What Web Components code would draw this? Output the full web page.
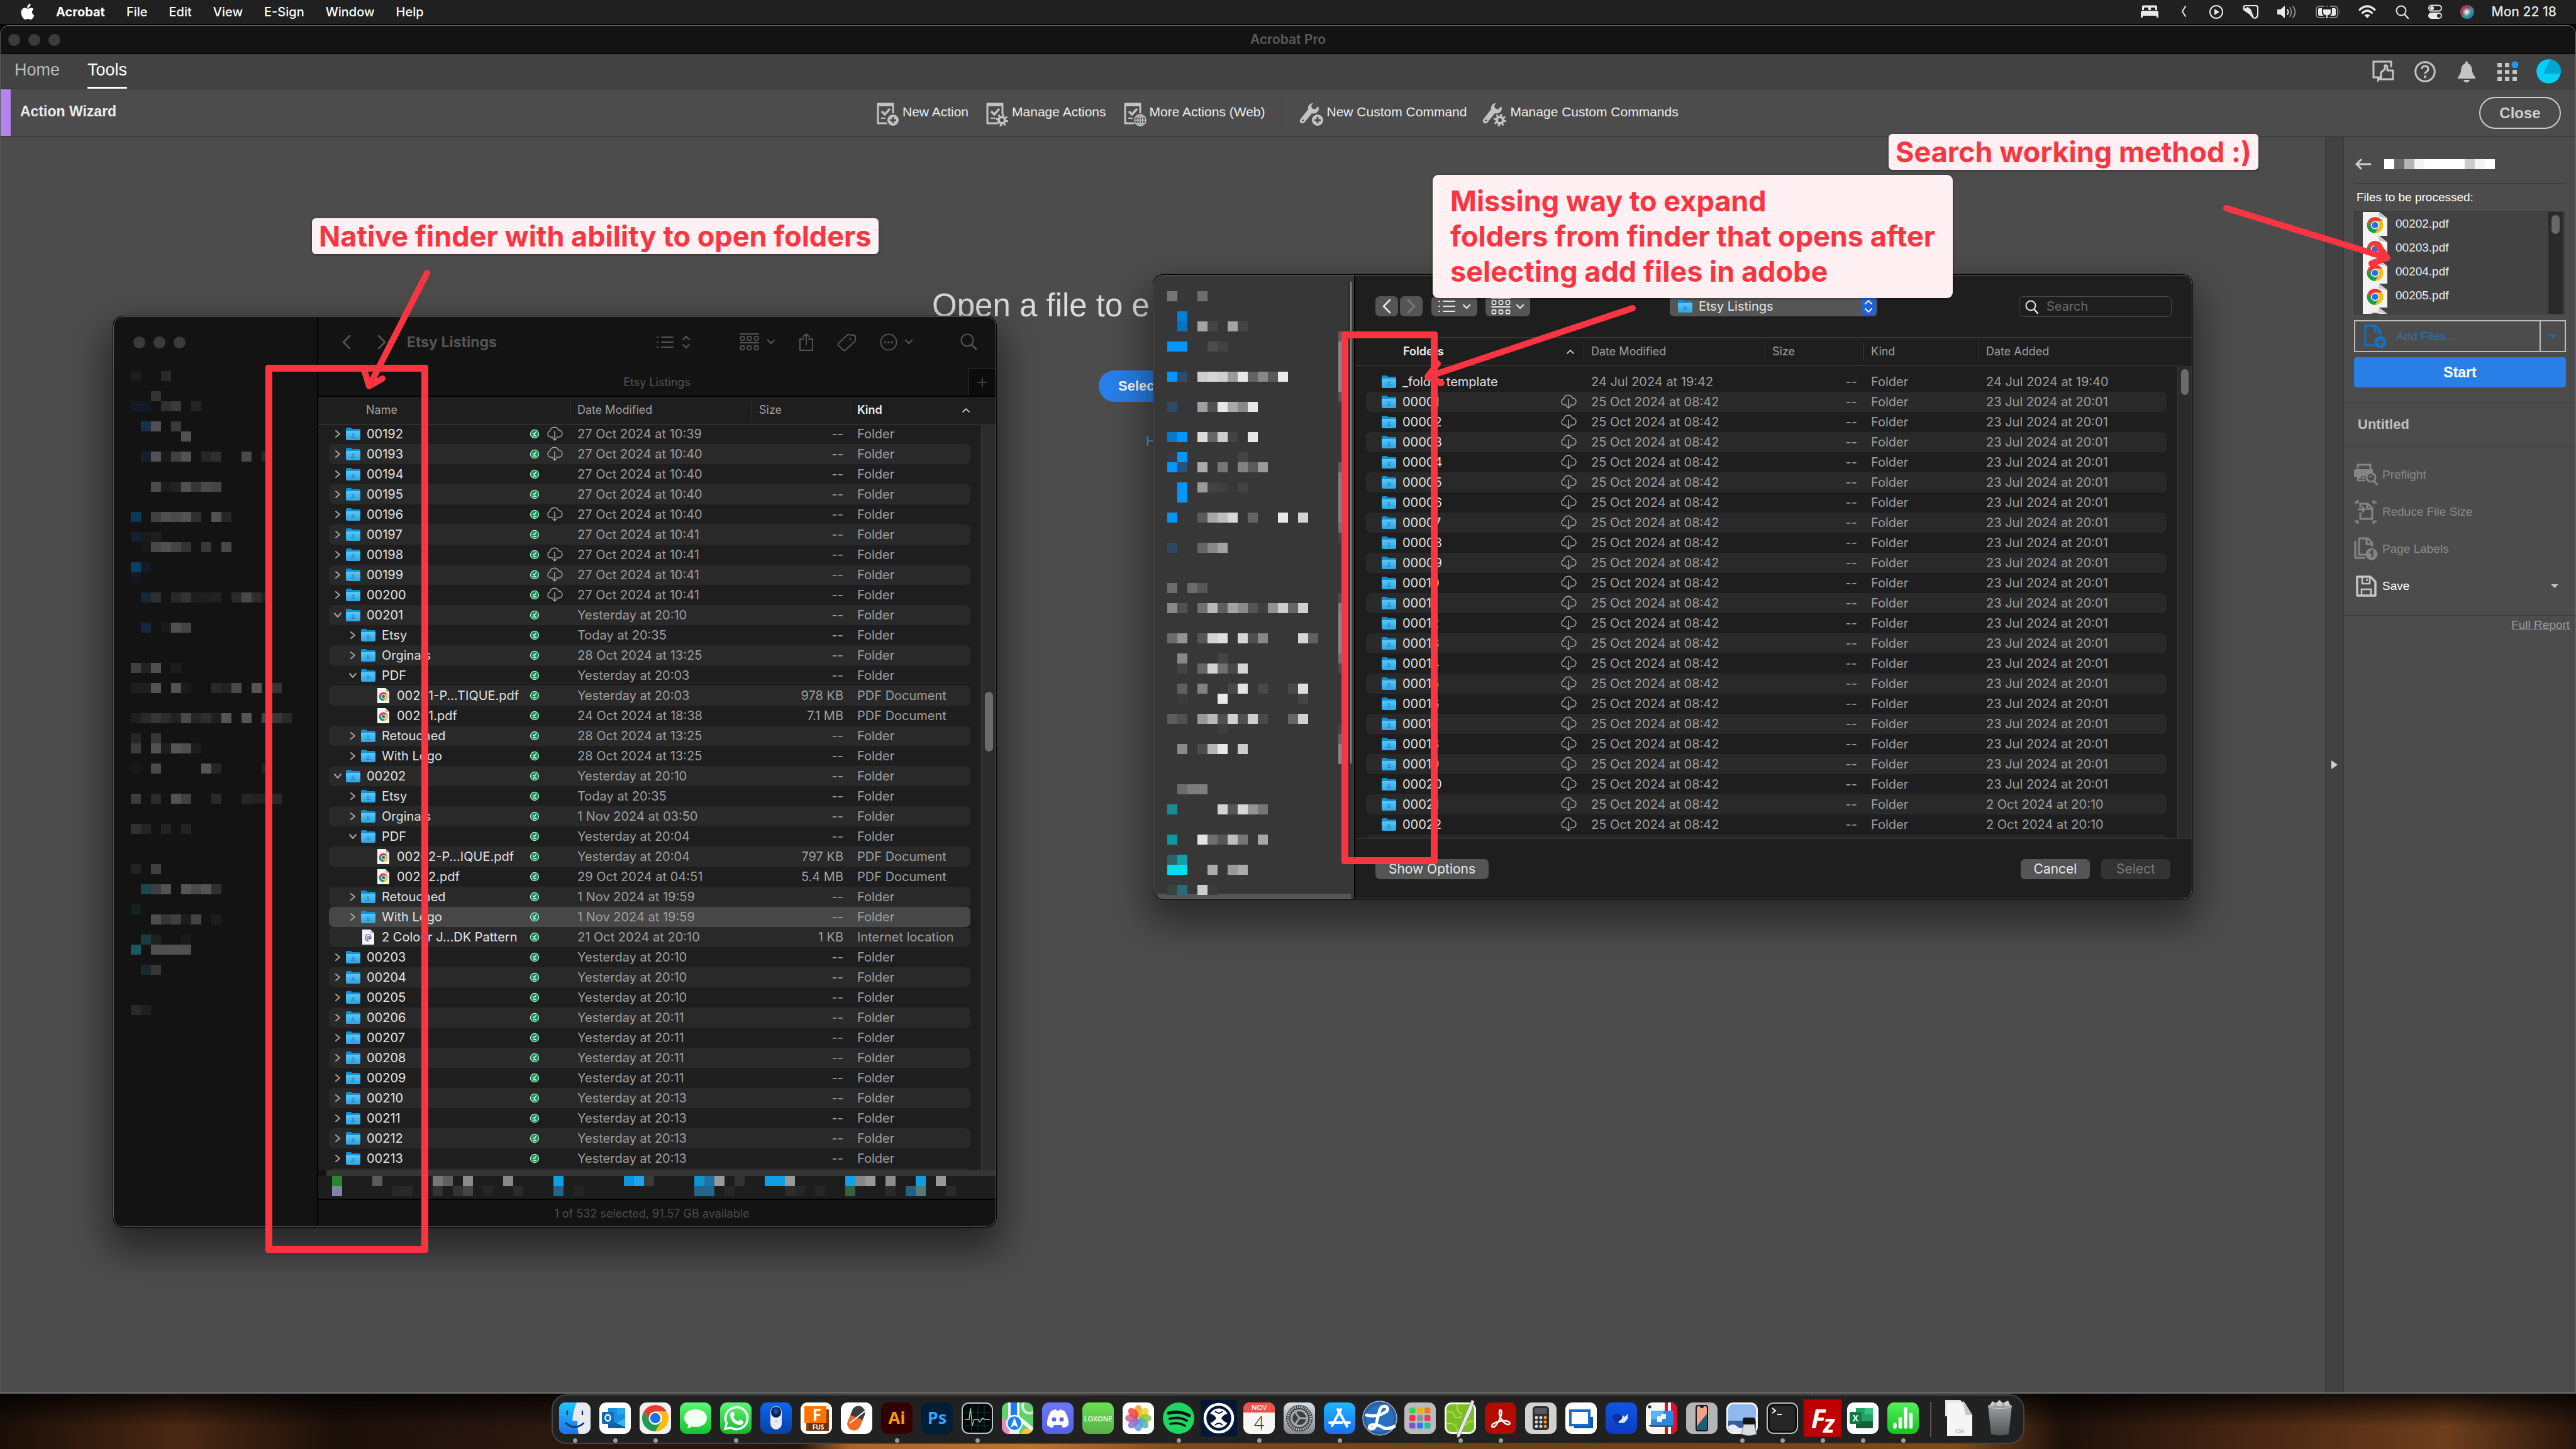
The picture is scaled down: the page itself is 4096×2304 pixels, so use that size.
<!DOCTYPE html>
<html lang="en">
<head>
<meta charset="utf-8">
<title>Acrobat Pro</title>
<style>
html,body{margin:0;padding:0}
body{min-height:100vh;display:flex;flex-direction:column;position:relative;overflow:hidden;font-family:Inter,"Liberation Sans",sans-serif;font-size:20px;color:#fff;
background:linear-gradient(180deg,rgba(0,0,0,.8),rgba(0,0,0,0) 60%) 0 100%/100% 88px no-repeat,linear-gradient(90deg,#1a0f08 0,#4a2814 7%,#1c100a 13%,#2a1710 21%,#26150c 31%,#a8652a 33%,#b87432 40%,#7a4a20 46%,#6e401a 60%,#7e4a1e 76%,#1d100a 80%,#4a2814 88%,#6e3e1c 95%,#2a170c 100%) 0 100%/100% 88px no-repeat,#000}
desk-menubar{flex:none}
acrobat-window{flex:1;margin-top:2px}
desk-dock{margin:1px auto 8px}
finder-window{position:absolute;left:180px;top:503px}
open-dialog{position:absolute;left:1834px;top:437px}
note-label{position:absolute}
note-frame{position:absolute}
note-arrows{position:absolute;inset:0;pointer-events:none}
</style>
</head>
<body>
<desk-menubar></desk-menubar>
<acrobat-window></acrobat-window>
<desk-dock></desk-dock>
<finder-window></finder-window>
<open-dialog></open-dialog>
<note-frame style="left:422px;top:580px;width:259px;height:1412px"></note-frame>
<note-frame style="left:2133px;top:527px;width:153px;height:847px"></note-frame>
<note-arrows></note-arrows>
<note-label style="left:496px;top:347px">Native finder with ability to open folders</note-label>
<note-label large style="left:2278px;top:278px">Missing way to expand<br>folders from finder that opens after<br>selecting add files in adobe</note-label>
<note-label style="left:3003px;top:213px">Search working method :)</note-label>
<script>
/* ---------- registration helper ---------- */
function element(name, html, setup) {
  const template = document.createElement('template');
  template.innerHTML = html;
  customElements.define(name, class extends HTMLElement {
    constructor() {
      super();
      this.attachShadow({ mode: 'open' }).append(template.content.cloneNode(true));
    }
    connectedCallback() { if (setup) setup(this, this.shadowRoot); }
  });
}

/* ---------- shared glyph parts ---------- */
const chrome = (x, y, r) => `<g transform="translate(${x} ${y}) scale(${r})"><path fill="#ea3b2e" d="M-.866-.5A1 1 0 0 1 .866-.5L0-.5-.433.25z"/><path fill="#fbbd0a" d="M.866-.5A1 1 0 0 1 0 1L.433.25 0-.5z"/><path fill="#1f9d4d" d="M0 1A1 1 0 0 1-.866-.5L-.433.25.433.25z"/><circle r=".5" fill="#fff"/><circle r=".39" fill="#1a73e8"/></g>`;
const S = 'fill="none" stroke="currentColor" stroke-linecap="round" stroke-linejoin="round"';
const pageCheck = `<path d="M20 34H4V3h24v17" fill="none" stroke="currentColor" stroke-width="3" stroke-linejoin="round"/><path d="M4 5h24" stroke="currentColor" stroke-width="4"/><path d="M10 15l5 5 8-9" fill="none" stroke="currentColor" stroke-width="3.5"/><path d="M9 26h7" stroke="currentColor" stroke-width="2"/>`;
const wrench = `<path d="M21 2a8 8 0 0 0-8 10L1 27a4 4 0 0 0 6 6l12-15a8 8 0 0 0 10-11l-5 5-5-2-1-4z" fill="currentColor"/><circle cx="4.500" cy="29.500" r="1.600" fill="#4c4c4c"/>`;
const plusBadge = `<circle cx="28" cy="29" r="11" fill="#4c4c4c"/><circle cx="28" cy="29" r="9" fill="currentColor"/><path d="M28 24v10M23 29h10" stroke="#4c4c4c" stroke-width="3"/>`;
const gearBadge = `<circle cx="27" cy="29" r="10" fill="#4c4c4c"/><circle cx="27" cy="29" r="8.500" fill="none" stroke="currentColor" stroke-width="3" stroke-dasharray="3.300 3.370"/><circle cx="27" cy="29" r="5" fill="none" stroke="currentColor" stroke-width="4"/>`;
const globeBadge = `<circle cx="28" cy="29" r="11" fill="#4c4c4c"/><g fill="none" stroke="currentColor" stroke-width="1.600"><circle cx="28" cy="29" r="9"/><ellipse cx="28" cy="29" rx="4" ry="9"/><path d="M28 20v18M19 29h18M21 24h14M21 34h14"/></g>`;

const ICONS = {
  apple: [22, 26, `<path fill="#fff" d="M15.600 0c.2 2-.6 3.600-1.600 4.800-1 1.100-2.400 1.900-3.900 1.800-.2-1.800.6-3.500 1.600-4.600C12.700.9 14.300.1 15.600 0zM20.500 8.800c-1.500 1-2.500 2.500-2.500 4.500 0 2.300 1.400 4.300 3.400 5.100-.8 2.400-3.200 6.600-5.600 6.600-1.600 0-2.200-1-4.200-1s-2.700 1-4.200 1C4.200 25 .6 19 .6 14c0-4.800 3-7.400 6-7.400 1.900 0 3.300 1.200 4.600 1.200s3-1.300 5.200-1.300c1.500 0 3.200.8 4.100 2.300z"/>`],
  bed: [36, 22, `<path fill="#e8e8e8" d="M2 8V3q0-2.500 2.500-2.500h19Q26 .500 26 3v5h-3V5q0-1-1-1h-6v4h-4V4H6Q5 4 5 5v3zM0 20v-8q0-3 3-3h22q3 0 3 3v8h-3v-3H3v3z"/>`],
  back1: [16, 22, `<path ${S} stroke-width="2" d="M7 2L2 10l5 8"/>`],
  play: [26, 24, `<circle cx="12" cy="12" r="10" ${S} stroke-width="2"/><path fill="#e8e8e8" d="M9 7l8 5-8 5z"/>`],
  shield: [26, 24, `<path fill="#e8e8e8" fill-rule="evenodd" d="M4 1h17q4 0 4 4v10q0 8-6 8-3 0-8-7L1 9Q-1 1 4 1zm1 2q-3 0-2 4l5-3 5 4 5 13q5 0 5-7V6q0-3-3-3z"/>`],
  volume: [34, 24, `<path fill="#e8e8e8" d="M1 8h5l7-6v20l-7-6H1z"/><path ${S} stroke-width="2" d="M17 8q3 4 0 8"/><path ${S} stroke-width="2" stroke-opacity=".55" d="M21 5q5 7 0 14M26 3q7 9 0 18"/>`],
  battery: [40, 24, `<rect x="1" y="3" width="34" height="18" rx="5" ${S} stroke-width="2" stroke-opacity=".5"/><path fill="#777" d="M37 9q3 3 0 6z"/><rect x="4" y="6" width="28" height="12" rx="2" fill="#e8e8e8"/><path fill="#e8e8e8" stroke="#202020" stroke-width="2" d="M14 1v6h-3v5q0 5 5 6v5h4v-5q5-1 5-6V7h-3V1h-2v6h-4V1z"/>`],
  wifi: [30, 24, `<g ${S} stroke-width="3.200" stroke-linecap="butt"><path d="M2 8.500q12-11 24 0M6.500 13.500q7.500-7 15 0"/></g><path fill="#e8e8e8" d="M14 22l-4.500-4.800q4.500-3.600 9 0z"/>`],
  find: [24, 24, `<circle cx="10" cy="10" r="7.500" ${S} stroke-width="2"/><path ${S} stroke-width="2.500" d="M15.500 16l5.500 6"/>`],
  control: [24, 24, `<rect x="2" y="1.500" width="20" height="9" rx="4.500" ${S} stroke-width="2"/><circle cx="7" cy="6" r="3" fill="#e8e8e8"/><rect x="1" y="13" width="22" height="10" rx="5" fill="#e8e8e8"/><circle cx="18" cy="18" r="3" fill="#202020"/>`],
  siri: [22, 24, `<defs><linearGradient id="s" x1="0" y1="0" x2="1" y2="1"><stop offset="0" stop-color="#f0306a"/><stop offset=".35" stop-color="#8a4060"/><stop offset=".55" stop-color="#3a9a88"/><stop offset="1" stop-color="#2060e0"/></linearGradient><radialGradient id="g"><stop offset="0" stop-color="#fff"/><stop offset="1" stop-color="#fff" stop-opacity="0"/></radialGradient></defs><circle cx="11" cy="12" r="11" fill="url(#s)"/><circle cx="10" cy="12" r="7" fill="url(#g)"/>`],

  feedback: [36, 36, `<path d="M13 27H2V2h28v9" fill="none" stroke="currentColor" stroke-width="3"/><path fill="currentColor" d="M8 26h9l-9 9z"/><path d="M14 30V19l6-5V8q4-1 4 3v5h9v14H16z" fill="#424242" stroke="currentColor" stroke-width="3" stroke-linejoin="round"/>`],
  help: [34, 34, `<circle cx="17" cy="17" r="15.300" fill="none" stroke="currentColor" stroke-width="3"/><path d="M12 13q0-5 5-5t5 4.500q0 3-2.500 4.500-2.500 1.600-2.500 3.500" fill="none" stroke="currentColor" stroke-width="3.200"/><circle cx="17" cy="25" r="2.200" fill="currentColor"/>`],
  bell: [28, 34, `<path fill="currentColor" d="M12 1h4v3q6 2 6.500 9 .500 8 5.500 13v2H0v-2q5-5 5.500-13Q6 6 12 4zM9 30h10q-1 4-5 4t-5-4z"/>`],
  apps: [34, 32, `<g fill="currentColor"><path d="M0 2h7v7H0zM12 2h7v7h-7zM0 13h7v7H0zM12 13h7v7h-7zM24 13h7v7h-7zM0 24h7v7H0zM12 24h7v7h-7zM24 24h7v7h-7z"/></g><circle cx="28" cy="5" r="5.500" fill="#1a9bfc"/>`],
  avatar: [39, 39, `<circle cx="19.500" cy="19.500" r="19.300" fill="#05d0fb"/><path fill="#03a8d2" d="M21 .3A19.300 19.300 0 0 1 38.700 23.500L11 23z"/>`],
  newAction: [38, 38, pageCheck + plusBadge], manageAction: [38, 38, pageCheck + gearBadge], webAction: [38, 38, pageCheck + globeBadge],
  newCommand: [38, 38, wrench + plusBadge], manageCommand: [38, 38, wrench + gearBadge],
  arrowLeft: [26, 18, `<path ${S} stroke-width="3" d="M9 2L2 9l7 7M2 9h22"/>`],
  addFile: [36, 38, `<path d="M17 33H2V2h16l8 8v6M17 3v8h9" fill="none" stroke="currentColor" stroke-width="3"/><circle cx="26" cy="28" r="9.500" fill="currentColor"/><path d="M26 23v10M21 28h10" stroke="#4c4c4c" stroke-width="2.500"/>`],
  down: [12, 6, `<path fill="currentColor" d="M0 0h12L6 6z"/>`],
  preflight: [38, 36, `<path d="M6 8V2h20v7" fill="none" stroke="currentColor" stroke-width="3"/><path fill="currentColor" d="M3 9h27v5h-3q-6 0-8 6h-8v4H5v-3H0v-9q0-3 3-3z"/><path d="M6 16v11h12M12 19h6M12 23h6" fill="none" stroke="currentColor" stroke-width="2.500"/><circle cx="27" cy="22" r="7" fill="#4c4c4c" stroke="currentColor" stroke-width="3"/><path d="M32 28l5 6" stroke="currentColor" stroke-width="3.500"/><path d="M24 22l5-3" stroke="currentColor" stroke-width="2"/>`],
  reduce: [38, 40, `<path d="M1 5h5V1M36 5h-5V1M1 35h5v4M36 35h-5v4" fill="none" stroke="currentColor" stroke-width="3"/><path d="M10 13V7h12l7 7v17H10V21" fill="none" stroke="currentColor" stroke-width="3"/><path d="M21 8v7h8M6 16h10" fill="none" stroke="currentColor" stroke-width="3"/><path fill="currentColor" d="M13 10l6 6-6 6z"/>`],
  labels: [38, 38, `<path d="M2 6v27h16" fill="none" stroke="currentColor" stroke-width="3"/><path d="M19 28H8V2h14l7 7v6M20 3v8h9" fill="none" stroke="currentColor" stroke-width="3"/><circle cx="28" cy="27" r="9.500" fill="currentColor"/><path d="M25 25l4-3v10" fill="none" stroke="#4c4c4c" stroke-width="3"/>`],
  save: [38, 34, `<path d="M5 2h21l8 8v22H5z" fill="none" stroke="currentColor" stroke-width="3.500" stroke-linejoin="round"/><path d="M13 2v11h12V2M12 31V22h15v9" fill="none" stroke="currentColor" stroke-width="2.500"/><path d="M20.500 5v4" stroke="currentColor" stroke-width="2.500"/>`],
  tri: [10, 14, `<path fill="currentColor" d="M0 0l10 7-10 7z"/>`],

  chevL: [14, 24, `<path ${S} stroke-width="2.600" d="M12 2L2 12l10 10"/>`],
  chevR: [14, 24, `<path ${S} stroke-width="2.600" d="M2 2l10 10L2 22"/>`],
  list: [28, 20, `<path ${S} stroke-width="2" d="M8 2h18M8 10h18M8 18h18M1 2h1M1 10h1M1 18h1"/>`],
  updown: [14, 22, `<path ${S} stroke-width="2.300" d="M2 7l5-5 5 5M2 15l5 5 5-5"/>`],
  group: [31, 28, `<path ${S} stroke-width="2" d="M1 1h29M1 15h29"/><g ${S} stroke-width="1.800"><rect x="1.500" y="5" width="6" height="6" rx="1.500"/><rect x="12.500" y="5" width="6" height="6" rx="1.500"/><rect x="23.500" y="5" width="6" height="6" rx="1.500"/><rect x="1.500" y="20" width="6" height="6" rx="1.500"/><rect x="12.500" y="20" width="6" height="6" rx="1.500"/><rect x="23.500" y="20" width="6" height="6" rx="1.500"/></g>`],
  chevD: [14, 9, `<path ${S} stroke-width="2.300" d="M2 2l5 5 5-5"/>`],
  caret: [14, 8, `<path ${S} stroke-width="1.600" d="M2 7l5-5 5 5"/>`],
  share: [24, 30, `<path ${S} stroke-width="2" d="M8 10H2v18h20V10h-6M12 19V2M7 6.500L12 2l5 4.500"/>`],
  tag: [32, 30, `<path ${S} stroke-width="2" d="M18 3l9 1q3 0 3 3v6L14 28q-2 1-3 0L3 20q-1-1 0-3z"/><circle cx="22" cy="10" r="1.600" fill="currentColor"/>`],
  more: [28, 28, `<circle cx="14" cy="14" r="12.500" ${S} stroke-width="2"/><g fill="currentColor"><circle cx="8.500" cy="14" r="1.700"/><circle cx="14" cy="14" r="1.700"/><circle cx="19.500" cy="14" r="1.700"/></g>`],
  search: [27, 27, `<circle cx="11" cy="11" r="9.500" ${S} stroke-width="2.200"/><path ${S} stroke-width="2.800" d="M18 18l7 7"/>`],
  plus: [16, 16, `<path ${S} stroke-width="1.500" d="M8 1v14M1 8h14"/>`],
  rowR: [12, 14, `<path ${S} stroke-width="2" d="M3 2l6 5-6 5"/>`],
  rowD: [12, 14, `<path ${S} stroke-width="2" d="M1 4l5 6 5-6"/>`],
  rowN: [12, 14, ``],
  folder: [24, 22, `<defs><linearGradient id="f" x1="0" y1="0" x2="0" y2="1"><stop offset="0" stop-color="#58c8fa"/><stop offset="1" stop-color="#2fa3e2"/></linearGradient></defs><path fill="#148fd0" d="M0 3q0-2 2-2h6l2 2h11q2 0 2 2v4H0z"/><path fill="url(#f)" d="M0 6h23v13q0 2-2 2H2q-2 0-2-2z"/><circle cx="11.500" cy="12" r="1.500" fill="none" stroke="#2a86be"/><path fill="none" stroke="#2a86be" d="M8 16.500q3.500-4 7 0z"/>`],
  pdf: [24, 24, `<path fill="#f4f4f4" d="M2 0h13l6 6v18H2z"/><path fill="#c4c4c4" d="M15 0v6h6z"/>` + chrome(11.5, 13.5, 7)],
  loc: [24, 24, `<path fill="#f4f4f4" d="M2 0h13l6 6v18H2z"/><path fill="#c4c4c4" d="M15 0v6h6z"/><circle cx="11.500" cy="13" r="2" fill="none" stroke="#3a4aa8" stroke-width="1.200"/><path fill="none" stroke="#3a4aa8" stroke-width="1.200" d="M13.500 11v3q2 2 2.500-1 0-5-4.500-5T7 13t5 5"/>`],
  synced: [14, 16, `<circle cx="7" cy="8" r="6.600" fill="#0f8f55" stroke="#c9ecd8" stroke-width="1.200"/><path fill="none" stroke="#fff" stroke-width="1.300" d="M4.500 6.500L6.500 8.500l3-4M4.500 11h5"/>`],
  cloud: [26, 24, `<path ${S} stroke-width="1.500" d="M10 17H6.500a5 5 0 0 1-1-9.700A7 7 0 0 1 19 6a5.500 5.500 0 0 1 1 11h-4M13 8v14M10 19l3 3 3-3"/>`],
  none: [26, 24, ``],
  chromeDoc: [39, 38, `<path fill="#f2f2f2" d="M0 0h26l13 10v28H0z"/><path fill="#c9c9c9" d="M25 0v7l14 4z"/>` + chrome(19.5, 21, 13)],
};

element('ui-icon', `<style>:host{display:inline-flex;flex:none}svg{display:block;overflow:visible}</style>`, (host, root) => {
  const [w, h, body] = ICONS[host.getAttribute('name')];
  root.innerHTML = root.innerHTML.split('</style>')[0] + `</style><svg width="${w}" height="${h}" viewBox="0 0 ${w} ${h}" aria-hidden="true">${body}</svg>`;
});

/* ---------- pixelated blocks: "row: col=colour …" ---------- */
const MOSAICS = {
  finder: [17, 64, `0:0=1c1c1c 3=2a2a2a|2:2=333|3:0=141a25 1=141a25 3=303030 4=3a3a3a 6=242424|5:1=15304a 2=505050 4=3a3a3a|6:5=505050|8:1=15202e 2=525252 3=1a1a1a 4=404040 5=525252 7=262626 8=2f2f2f 11=4a4a4a 13=2a2a2a|11:2=4a4a4a 3=1c1c1c 4=222 5=505050 6=363636 7=4a4a4a 8=444|14:0=0f3858 2=404040 3=505050 4=4a4a4a 5=525252 6=303030 8=525252 9=262626|16:0=15202e 1=181a1c 2=1f1f1f|17:1=16191c 2=484848 3=505050 4=444 5=333 7=383838 9=484848|19:0=0c3f66 1=151a24|20:0=151820|22:1=152536 2=2e2e2e 4=292929 5=333 6=1d1d1d 7=202020 8=222 10=2a2a2a 11=484848 12=2e2e2e 13=1f1f1f|25:1=132840 3=1a1a1a 4=505050 5=444|29:0=404040 1=222 2=505050 4=1e1e1e|31:0=1f1f1f 1=1f1f1f 2=525252 4=525252 5=1a1a1a 8=292929 9=222 10=4a4a4a 12=555 14=333|34:0=1f1f1f 1=2a2a2a 2=363636 3=2c2c2c 4=222 5=4a4a4a 6=262626 7=2e2e2e 8=1f1f1f 9=555 11=555 13=404040 14=363636 15=292929|36:0=262626 2=363636|37:0=3c3c3c 2=525252 3=1d1d1d 4=555 5=4e4e4e 6=1d1d1d|39:0=181818 2=4a4a4a 7=555 8=262626 13=222|42:0=3c3c3c 2=2a2a2a 4=525252 5=404040 8=2a2a2a 11=262626 12=222 13=222 14=292929|45:0=303030 1=242424 3=222 5=222|49:0=222 2=404040|51:1=1a474d 2=3e3e3e 3=525252 5=555 6=4a4a4a 7=555 8=303030|53:0=152224|54:2=4e4e4e 3=363636 4=404040 5=1d1d1d 6=444 8=1d1d1d|56:1=163d42 2=202020 5=1a1a1a|57:0=185860 2=505050 3=505050 4=505050 5=505050|59:1=162a2e 2=363636|63:0=292929 1=1f1f1f`],
  path: [66, 2, `0:0=27862f 4=5a5a5a 10=777 11=606060 13=8c8c8c 17=888 22=0fa0e4 29=0d95dc 30=1ba6e8 31=3a3a3a 36=0f93cc 37=20729f 38=999 40=333 43=0fa0e4 44=0fa0e4 45=999 51=0fa0e4 52=888 53=999 55=8c8c8c 58=0fa0e4 60=999|1:0=7f84a0 6=282828 7=282828 10=333 12=333 13=444 15=262626 18=2a2a2a 22=25638a 24=242424 36=24658c 37=24658c 39=262626 45=2c2c2c 46=262626 48=262626 51=38603c 55=2a2a2a 57=256088 58=5a7a70 61=2a2a2a`],
  dialog: [18, 60, `0:0=767676 3=6d6d6d|2:1=0582d8|3:1=0573bd 3=a3a3a3 4=444 6=a3a3a3 7=444|4:17=5d5d5d|5:0=0595ff 1=0595ff 4=4d4d4d 5=434343 17=888|6:17=888|7:17=888|8:0=0595ff 1=2f4a70 3=cdcdcd 4=d6d6d6 5=d0d0d0 6=9a9a9a 7=e8e8e8 8=636363 9=878787 10=585858 11=ebebeb 17=888|9:17=888|10:17=555|11:0=2f4a68 1=33363f 3=a0a0a0 4=505050 5=e8e8e8 6=a8a8a8 7=888 8=e8e8e8|14:0=0679c8 1=0595ff 3=dcdcdc 4=666 5=cdcdcd 6=434343 8=e6e6e6|16:0=363a44 1=0595ff 7=444|17:0=0595ff 1=29537f 3=ababab 5=777 7=828282 8=5a5a5a 9=999 17=5d5d5d|18:17=808080|19:1=0595ff 3=9b9b9b 4=434343 5=3e3e3e 7=434343 17=808080|20:1=0595ff 17=808080|21:17=808080|22:0=0595ff 3=5a5a5a 4=a6a6a6 5=bdbdbd 6=d8d8d8 8=636363 11=e8e8e8 13=d3d3d3 17=808080|23:17=707070|24:17=444|25:0=2f4765 3=666 4=878787 5=a3a3a3|29:0=6e6e6e 2=6b6b6b 3=565656|30:17=4d4d4d|31:0=888 1=505050 3=707070 4=b8b8b8 5=5f5f5f 6=a3a3a3 7=8b8b8b 8=555 9=404040 10=929292 11=cdcdcd 12=666 13=d0d0d0 17=808080|32:17=888|33:17=888|34:0=6b6b6b 1=939393 3=565656 4=d3d3d3 5=dedede 7=d6d6d6 8=505050 9=878787 13=d6d6d6 14=606060 17=888|35:17=888|36:1=888 5=444 17=707070|37:1=444 3=666 4=d3d3d3 5=707070 6=484848 7=d6d6d6 17=484848|39:1=606060 3=828282 6=484848 7=e3e3e3 9=484848 12=484848 13=dedede|40:1=3c3c3c 5=eaeaea 13=444|42:0=5d5d5d 1=505050 3=999 4=b8b8b8 5=505050 6=d0d0d0 7=505050 8=cdcdcd 9=484848 12=666 13=d0d0d0|43:5=3e3e3e 17=444|44:17=666|45:1=8b8b8b 3=4d4d4d 4=b5b5b5 5=e8e8e8 7=cdcdcd 17=888|46:17=888|49:1=6b6b6b 2=7d7d7d 3=7d7d7d|51:0=1a8d94 5=d3d3d3 6=565656 7=d8d8d8 8=939393 9=767676|54:0=0d98a2 3=e3e3e3 4=6e6e6e 5=565656 6=bdbdbd 7=767676 9=a6a6a6|56:0=2f6268 1=11a0a8|57:0=05dcec 1=05dcec 4=ababab 6=999 7=ababab|59:0=38423f 1=2c6a75 3=cdcdcd 4=3c3c3c`],
  title: [11, 1, `0:0=fff 1=6b6b6b 2=b5b5b5 3=f5f5f5 4=fff 5=fff 6=fff 7=fff 8=ccc 9=f5f5f5 10=fff`],
};
element('pixel-mosaic', `<style>:host{display:block}svg{display:block}</style><svg shape-rendering="crispEdges" aria-hidden="true"></svg>`, (host, root) => {
  const [w, h, data] = MOSAICS[host.getAttribute('name')];
  const svg = root.querySelector('svg');
  svg.setAttribute('width', w * 16); svg.setAttribute('height', h * 16);
  svg.innerHTML = data.split('|').map(line => {
    const [row, cells] = line.split(':');
    return cells.split(' ').map(cell => { const [c, col] = cell.split('='); return `<rect x="${c * 16}" y="${row * 16}" width="16" height="16" fill="#${col}"/>`; }).join('');
  }).join('');
});

/* ---------- menu bar ---------- */
element('desk-menubar', `<style>
:host{display:flex;justify-content:space-between;align-items:center;height:38px;background:#202020;font:500 20px/38px Inter,sans-serif;color:#fff;padding:0 31px 0 33px}
nav,div{display:flex;align-items:center}
nav{gap:34px}
div{gap:28px;color:#e8e8e8}
button{font:inherit;color:inherit;background:none;border:0;padding:0;line-height:inherit}
.app{font-weight:700}
time{font-size:21px}
</style><nav><ui-icon name="apple"></ui-icon><button class="app">Acrobat</button><button>File</button><button>Edit</button><button>View</button><button>E-Sign</button><button>Window</button><button>Help</button></nav>
<div><ui-icon name="bed"></ui-icon><ui-icon name="back1"></ui-icon><ui-icon name="play"></ui-icon><ui-icon name="shield"></ui-icon><ui-icon name="volume"></ui-icon><ui-icon name="battery"></ui-icon><ui-icon name="wifi"></ui-icon><ui-icon name="find"></ui-icon><ui-icon name="control"></ui-icon><ui-icon name="siri"></ui-icon><time>Mon 22 18</time></div>`);

element('window-lights', `<style>:host{display:flex;gap:13px}i{width:19px;height:19px;border-radius:50%;background:#3b3b3b}</style><i></i><i></i><i></i>`);

/* ---------- Acrobat window ---------- */
element('acrobat-window', `<style>
:host{display:flex;flex-direction:column;box-sizing:border-box;border:1px solid #6a6a6a;border-bottom:2px solid #707070;border-left-color:#555;border-radius:14px 14px 0 0;overflow:hidden;background:#4c4c4c;font-family:"Liberation Sans",Arial,sans-serif;color:#e0e0e0}
button{font:inherit;color:inherit;background:none;border:0;padding:0}
a{color:inherit}
.title{display:grid;grid-template-columns:1fr auto 1fr;align-items:center;height:44px;background:#131313;border-bottom:1px solid #000;padding:0 12px;font:600 21px/42px Inter,sans-serif;color:#5a5a5a}
.tabs{display:flex;justify-content:space-between;height:55px;background:#424242;border-bottom:1px solid #303030;padding:0 23px 0 22px}
.tabs nav{display:flex;gap:44px;font-size:27px;line-height:50px}
.tabs a{text-decoration:none;color:#bcbcbc;height:52px}
.tabs a[aria-current]{color:#fff;border-bottom:3px solid #fff}
.icons{display:flex;align-items:center;gap:31px;color:#c4c4c4}
.bar{display:grid;grid-template-columns:1376px auto 1fr;align-items:center;height:74px;border-bottom:2px solid #3b3b3b;box-sizing:content-box}
.bar h1{margin:0;height:74px;border-left:16px solid #b583ee;padding-left:15px;font-size:23px;line-height:71px;color:#ececec}
.cmds{display:flex;align-items:center;padding-left:15px;font-size:21px;color:#ececec;padding-bottom:3px}
.cmds button{display:flex;align-items:center;gap:5px;margin-right:26px}
.cmds button ui-icon{color:#c2c2c2;padding-top:7px}
.cmds span{width:1px;height:44px;background:#333;margin-right:28px}
.close{justify-self:end;margin-right:23px;width:130px;height:51px;border:2px solid #cfcfcf;border-radius:26px;font-weight:700;font-size:24px;color:#cfcfcf;margin-top:1px}
.body{display:flex;flex:1}
main{flex:1;display:flex;flex-direction:column;align-items:center;padding-top:238px}
main h2{margin:0;width:734px;font-weight:400;font-size:51px;line-height:60px;color:#dcdcdc;white-space:nowrap}
main .pick{margin-top:73px;width:204px;height:50px;border-radius:25px;background:#287fe8;color:#fff;font-weight:700;font-size:22px;text-align:left;padding-left:31px}
main a{margin-top:50px;width:54px;font-size:22px;line-height:26px;color:#56a4cc;text-decoration:none}
.strip{width:26px;border:2px solid #393939;border-width:0 2px;background:#424242;display:flex;align-items:center;justify-content:center;color:#cfcfcf}
</style>
<header class="title"><window-lights></window-lights><span>Acrobat Pro</span></header>
<div class="tabs"><nav><a href="#home">Home</a><a href="#tools" aria-current="page">Tools</a></nav>
<div class="icons"><ui-icon name="feedback"></ui-icon><ui-icon name="help"></ui-icon><ui-icon name="bell" style="padding:0 4px"></ui-icon><ui-icon name="apps" style="margin-right:-3px"></ui-icon><ui-icon name="avatar"></ui-icon></div></div>
<div class="bar"><h1>Action Wizard</h1><div class="cmds">
<button><ui-icon name="newAction"></ui-icon>New Action</button><button><ui-icon name="manageAction"></ui-icon>Manage Actions</button><button><ui-icon name="webAction"></ui-icon>More Actions (Web)</button><span></span><button><ui-icon name="newCommand"></ui-icon>New Custom Command</button><button><ui-icon name="manageCommand"></ui-icon>Manage Custom Commands</button></div>
<button class="close">Close</button></div>
<div class="body"><main><h2>Open a file to e</h2><button class="pick">Select</button><a href="#how">H</a></main>
<div class="strip"><ui-icon name="tri"></ui-icon></div><action-panel></action-panel></div>`);

element('action-panel', `<style>
:host{display:block;width:368px;font-size:19px;color:#ececec}
button{font:inherit;color:inherit;background:none;border:0;padding:0}
.inner{padding:0 15px 23px 16px}
.head{display:flex;align-items:center;gap:20px;height:74px;padding-top:12px;box-sizing:border-box;border-bottom:1px solid #3a3a3a;color:#cfcfcf}
.head ui-icon{margin-left:2px}
.lab{line-height:44px;padding-left:4px;color:#fff}
.files{display:flex;height:164px;box-sizing:border-box;border:1px solid #393939;background:#424242;overflow:hidden;margin-right:2px}
.files ul{flex:1;margin:0;padding:0 0 0 13px;list-style:none}
.files li{display:flex;align-items:center;gap:13px;height:38px;line-height:34px}
.track{width:23px;background:#2a2a2a;margin-right:2px}
.track i{display:block;width:13px;height:30px;margin:5px auto;border-radius:7px;background:#686868}
.add{display:flex;height:51px;margin-top:9px;box-sizing:border-box;border:2px solid #bdbdbd;color:#2a70c4}
.add .a{flex:1;display:flex;align-items:center;gap:15px;padding-left:14px}
.add ui-icon{color:#0a74cc}
.add .b{width:40px;border-left:2px solid #bdbdbd;display:flex;align-items:center;justify-content:center}
.start{display:block;width:100%;height:48px;margin-top:8px;border-radius:4px;background:#287fe8;color:#fff;font-weight:700;font-size:23px}
h3{margin:0;border:solid #3a3a3a;border-width:1px 0;padding-left:22px;line-height:70px;font-size:22px;color:#c0c0c0}
ol{list-style:none;margin:0;padding:14px 27px 17px 16px;border-bottom:1px solid #3a3a3a;color:#8b8b8b}
ol li{display:flex;align-items:center;gap:7px;height:59px;line-height:52px}
ol .on{color:#c6c6c6}ol .on b{color:#fff;font-weight:400;flex:1}
li ui-icon{color:#858585}.on ui-icon{color:#c6c6c6}
.report{display:block;text-align:right;padding:3px 9px 0 0;line-height:24px;color:#9a9a9a}
</style>
<div class="inner"><div class="head"><ui-icon name="arrowLeft"></ui-icon><pixel-mosaic name="title"></pixel-mosaic></div>
<div class="lab">Files to be processed:</div>
<div class="files"><ul><li><ui-icon name="chromeDoc"></ui-icon>00202.pdf</li><li><ui-icon name="chromeDoc"></ui-icon>00203.pdf</li><li><ui-icon name="chromeDoc"></ui-icon>00204.pdf</li><li><ui-icon name="chromeDoc"></ui-icon>00205.pdf</li><li><ui-icon name="chromeDoc"></ui-icon></li></ul><div class="track"><i></i></div></div>
<div class="add"><button class="a"><ui-icon name="addFile"></ui-icon>Add Files...</button><button class="b" aria-label="More sources"><ui-icon name="down"></ui-icon></button></div>
<button class="start">Start</button></div>
<h3>Untitled</h3>
<ol><li><ui-icon name="preflight"></ui-icon>Preflight</li><li><ui-icon name="reduce"></ui-icon>Reduce File Size</li><li><ui-icon name="labels"></ui-icon>Page Labels</li><li class="on"><ui-icon name="save"></ui-icon><b>Save</b><ui-icon name="down"></ui-icon></li></ol>
<a class="report" href="#report">Full Report</a>`);

/* ---------- file tables ---------- */
const TABLE_CSS = `<style>
:host{display:block;font:400 20px/32px Inter,sans-serif;color:#9e9e9e}
table{border-collapse:separate;border-spacing:0;table-layout:fixed;width:100%}
th,td{padding:0;text-align:left;white-space:nowrap;height:32px}
th{height:var(--head,43px);font-weight:400;font-size:18px}
th div{display:flex;align-items:center;justify-content:space-between;height:30px;margin-bottom:2px;border-left:1px solid #383838;padding-left:11px}
th:first-child div{border:0;padding:0 14px 0 59px}
th.sorted{color:#ececec;font-weight:600}
tr.gap td{height:9px;line-height:9px}
tbody tr.odd td{background:#292929}
tbody tr.sel td{background:#474747}
tbody td:first-child{border-radius:8px 0 0 8px}tbody td:last-child{border-radius:0 8px 8px 0}
td{padding-left:12px}
td.n{padding:0 11px 0 var(--pad,8px)}
td.n div{display:flex;align-items:center;height:32px;color:#e2e2e2}
td.n ui-icon{color:#a6a6a6}
td.n .t{margin:0 auto 0 9px}
td.n .kind{margin-left:7px}
td.n .cloud{margin-left:12px}
td.s{text-align:right;padding:0 10px 0 0}
</style>`;
const cols = list => '<colgroup>' + list.map(w => `<col style="width:${w}">`).join('') + '</colgroup>';

const ROWS = [];
const add = (name, date, o = {}) => ROWS.push({ name, date, lvl: 0, open: 'R', icon: 'folder', size: '--', kind: 'Folder', ...o });
[['00192', '39', 1], ['00193', '40', 1], ['00194', '40', 0], ['00195', '40', 0], ['00196', '40', 1], ['00197', '41', 0], ['00198', '41', 1], ['00199', '41', 1], ['00200', '41', 1]].forEach(([n, m, c]) => add(n, '27 Oct 2024 at 10:' + m, { cloud: c }));
const sub = (n, d, o) => add(n, d, { lvl: 1, ...o });
const doc = (n, d, size) => add(n, d, { lvl: 2, open: 'N', icon: 'pdf', size, kind: 'PDF Document' });
add('00201', 'Yesterday at 20:10', { open: 'D' });
sub('Etsy', 'Today at 20:35'); sub('Orginals', '28 Oct 2024 at 13:25'); sub('PDF', 'Yesterday at 20:03', { open: 'D' });
doc('00201-P...TIQUE.pdf', 'Yesterday at 20:03', '978 KB'); doc('00201.pdf', '24 Oct 2024 at 18:38', '7.1 MB');
sub('Retouched', '28 Oct 2024 at 13:25'); sub('With Logo', '28 Oct 2024 at 13:25');
add('00202', 'Yesterday at 20:10', { open: 'D' });
sub('Etsy', 'Today at 20:35'); sub('Orginals', '1 Nov 2024 at 03:50'); sub('PDF', 'Yesterday at 20:04', { open: 'D' });
doc('00202-P...IQUE.pdf', 'Yesterday at 20:04', '797 KB'); doc('00202.pdf', '29 Oct 2024 at 04:51', '5.4 MB');
sub('Retouched', '1 Nov 2024 at 19:59'); sub('With Logo', '1 Nov 2024 at 19:59', { sel: 1 });
sub('2 Colour J...DK Pattern', '21 Oct 2024 at 20:10', { open: 'N', icon: 'loc', size: '1 KB', kind: 'Internet location' });
['10', '10', '10', '11', '11', '11', '11', '13', '13', '13', '13'].forEach((m, i) => add('00' + (203 + i), 'Yesterday at 20:' + m));

element('finder-table', TABLE_CSS + `<div id="t"></div>`, (host, root) => {
  root.getElementById('t').innerHTML = `<table>${cols(['383px', '289px', '156px', 'auto'])}<thead><tr><th><div>Name</div></th><th><div>Date Modified</div></th><th><div>Size</div></th><th class="sorted"><div>Kind<ui-icon name="caret"></ui-icon></div></th></tr></thead><tbody>` +
    ROWS.map((r, i) => `<tr class="${i % 2 ? 'odd' : ''} ${r.sel ? 'sel' : ''}"><td class="n"><div style="padding-left:${r.lvl * 24}px"><ui-icon name="row${r.open}"></ui-icon><ui-icon class="kind" name="${r.icon}"></ui-icon><span class="t">${r.name}</span><ui-icon name="synced"></ui-icon><ui-icon class="cloud" name="${r.cloud ? 'cloud' : 'none'}"></ui-icon></div></td><td>${r.date}</td><td class="s">${r.size}</td><td>${r.kind}</td></tr>`).join('') +
    `<tr class="odd"><td></td><td></td><td></td><td></td></tr></tbody></table>`;
});

element('picker-table', TABLE_CSS + `<div id="t"></div>`, (host, root) => {
  const rows = [['_folder template', '24 Jul 2024 at 19:42', '24 Jul 2024 at 19:40']];
  for (let i = 1; i <= 22; i++) rows.push([String(i).padStart(5, '0'), '25 Oct 2024 at 08:42', i > 20 ? '2 Oct 2024 at 20:10' : '23 Jul 2024 at 20:01']);
  root.getElementById('t').innerHTML = `<table>${cols(['346px', '288px', '157px', '183px', 'auto'])}<thead><tr><th class="sorted"><div>Folders<ui-icon name="caret"></ui-icon></div></th><th><div>Date Modified</div></th><th><div>Size</div></th><th><div>Kind</div></th><th><div>Date Added</div></th></tr></thead><tbody><tr class="gap"><td colspan="5"></td></tr>` +
    rows.map(([n, d, a], i) => `<tr class="${i % 2 ? 'odd' : ''}"><td class="n"><div><ui-icon name="folder"></ui-icon><span class="t">${n}</span><ui-icon name="${i ? 'cloud' : 'none'}"></ui-icon></div></td><td>${d}</td><td class="s">--</td><td>Folder</td><td>${a}</td></tr>`).join('') +
    `<tr class="odd"><td class="n"><div><ui-icon name="folder"></ui-icon></div></td><td></td><td></td><td></td><td></td></tr></tbody></table>`;
});

/* ---------- Finder window ---------- */
element('finder-window', `<style>
:host{display:flex;box-sizing:border-box;width:1404px;height:1448px;border:1px solid #5c5c5c;border-radius:16px;overflow:hidden;background:#131313;box-shadow:0 0 0 1px #000,0 28px 60px 10px rgba(0,0,0,.5);color:#545454}
aside{width:325px;box-sizing:border-box;border-right:2px solid #000}
aside window-lights{padding:31px 0 0 31px}
aside pixel-mosaic{padding:36px 0 0 27px}
section{flex:1;display:flex;flex-direction:column;min-width:0}
button{font:inherit;color:inherit;background:none;border:0;padding:0;display:flex;align-items:center}
header{display:flex;align-items:center;height:82px;box-sizing:border-box;padding:0 29px 3px 38px;flex:none}
header strong{font-size:23px;font-weight:700;margin-left:33px;flex:1}
.nav{display:flex;gap:42px}
.tools{display:flex;align-items:center}
.tabs{display:flex;height:45px;box-sizing:border-box;border-bottom:2px solid #000;font-size:18px;line-height:43px;text-align:center;flex:none}
.tabs span{flex:1;padding-left:43px}
.tabs button{width:43px;background:#0c0c0c;border:solid #333;border-width:1px 0 0 1px;justify-content:center}
.list{display:flex;height:1229px;background:#1e1e1e;overflow:hidden;flex:none}
.list .c{flex:1;padding:0 17px 0 17px;background:linear-gradient(#3c3c3c,#3c3c3c) 0 43px/100% 1px no-repeat}
.track{width:22px;border-left:1px solid #383838;background:#2b2b2b;margin-top:43px}
.track i{display:block;width:13px;height:95px;border-radius:7px;background:#6b6b6b;margin:426px auto 0}
.bar{height:10px;background:#353535;margin-left:13px;flex:none}
.path{height:38px;background:#1d1d1d;border-bottom:2px solid #000;overflow:hidden;box-sizing:border-box;flex:none}
.path pixel-mosaic{padding-left:22px}
footer{flex:1;display:flex;align-items:center;justify-content:center;font-size:18px;padding-right:16px;color:#4c4c4c}
</style>
<aside><window-lights></window-lights><pixel-mosaic name="finder"></pixel-mosaic></aside>
<section><header><div class="nav"><button aria-label="Back"><ui-icon name="chevL"></ui-icon></button><button aria-label="Forward"><ui-icon name="chevR"></ui-icon></button></div><strong>Etsy Listings</strong>
<div class="tools"><button aria-label="View" style="gap:12px;margin-right:78px"><ui-icon name="list"></ui-icon><ui-icon name="updown"></ui-icon></button><button aria-label="Group" style="gap:12px;margin-right:37px"><ui-icon name="group"></ui-icon><ui-icon name="chevD"></ui-icon></button><button aria-label="Share" style="margin-right:36px"><ui-icon name="share"></ui-icon></button><button aria-label="Tags" style="margin-right:37px"><ui-icon name="tag"></ui-icon></button><button aria-label="More" style="gap:11px;margin-right:75px"><ui-icon name="more"></ui-icon><ui-icon name="chevD"></ui-icon></button><button aria-label="Search"><ui-icon name="search"></ui-icon></button></div></header>
<div class="tabs"><span>Etsy Listings</span><button aria-label="New tab"><ui-icon name="plus"></ui-icon></button></div>
<div class="list"><div class="c"><finder-table></finder-table></div><div class="track"><i></i></div></div>
<div class="bar"></div><div class="path"><pixel-mosaic name="path"></pixel-mosaic></div>
<footer>1 of 532 selected, 91.57 GB available</footer></section>`);

/* ---------- open dialog ---------- */
element('open-dialog', `<style>
:host{display:flex;box-sizing:border-box;width:1652px;height:993px;border:1px solid #6a6a6a;border-radius:16px;overflow:hidden;background:#1e1e1e;box-shadow:0 0 0 1px #000,0 28px 60px 10px rgba(0,0,0,.45);color:#e8e8e8;font-size:20px}
aside{width:320px;box-sizing:border-box;border-right:2px solid #000;background:linear-gradient(#555,#555) 6px 100%/307px 8px no-repeat,linear-gradient(#8c8c8c,#8c8c8c) 312px 10px/2px 766px no-repeat,linear-gradient(#2d2d2d,#2d2d2d) 308px 10px/4px 920px no-repeat,#373737}
aside pixel-mosaic{padding:25px 0 0 21px}
section{flex:1;display:flex;flex-direction:column;min-width:0}
button,select,input{font:inherit;color:inherit;box-sizing:border-box}
button{border:0;border-radius:7px;background:#555;height:32px;padding:0;display:flex;align-items:center;justify-content:center}
header{display:flex;align-items:center;height:99px;box-sizing:border-box;border-bottom:1px solid #3e3e3e;padding:0 32px;flex:none}
.folder{position:relative;margin-left:222px;margin-right:auto;display:flex}
.folder select{appearance:none;width:330px;height:32px;border:0;border-radius:7px;background:#555;padding:0 40px 0 46px}
.folder .f{position:absolute;left:13px;top:5px;pointer-events:none}
.folder .s{position:absolute;right:2px;top:2px;width:24px;height:28px;border-radius:6px;background:#1d62dc;align-items:center;justify-content:center;pointer-events:none}
.find{position:relative;display:flex}
.find input{width:243px;height:33px;border:1px solid #4a4a4a;border-radius:7px;background:#1e1e1e;padding:0 8px 0 43px;outline:0}
.find input::placeholder{color:#6c6c6c;opacity:1}
.find ui-icon{position:absolute;left:9px;top:5px}
.list{display:flex;height:797px;box-sizing:border-box;border-bottom:1px solid #333;overflow:hidden;flex:none}
.list .c{flex:1;padding:0 17px;background:linear-gradient(#3e3e3e,#3e3e3e) 0 44px/100% 1px no-repeat}
picker-table{--head:45px;--pad:25px}
.track{width:22px;border-left:1px solid #383838;background:#2b2b2b;margin-top:45px}
.track i{display:block;width:12px;height:41px;border-radius:6px;background:#6b6b6b;margin:5px auto 0}
footer{flex:1;display:flex;align-items:center;gap:18px;padding:0 34px 0 32px}
footer button{width:110px;font-size:21px}
footer .o{width:180px;margin-right:auto}
footer .off{background:#333;color:#777}
</style>
<aside><pixel-mosaic name="dialog"></pixel-mosaic></aside>
<section><header><button aria-label="Back" style="width:36px;margin-right:3px"><ui-icon name="chevL"></ui-icon></button><button aria-label="Forward" style="width:36px;margin-right:14px;color:#7c7c7c"><ui-icon name="chevR"></ui-icon></button><button aria-label="View" style="width:73px;margin-right:13px;gap:10px"><ui-icon name="list"></ui-icon><ui-icon name="chevD"></ui-icon></button><button aria-label="Group" style="width:71px;gap:8px"><ui-icon name="group"></ui-icon><ui-icon name="chevD"></ui-icon></button>
<div class="folder"><select aria-label="Folder"><option>Etsy Listings</option></select><ui-icon class="f" name="folder"></ui-icon><ui-icon class="s" name="updown"></ui-icon></div>
<div class="find"><input type="search" aria-label="Search" placeholder="Search"><ui-icon name="find"></ui-icon></div></header>
<div class="list"><div class="c"><picker-table></picker-table></div><div class="track"><i></i></div></div>
<footer><button class="o">Show Options</button><button>Cancel</button><button class="off" disabled>Select</button></footer></section>`);

/* ---------- dock ---------- */
const bg = (c, extra = '') => `<rect width="50" height="50" rx="11" fill="${c}" ${extra}/>`;
const lg = (id, a, b) => `<defs><linearGradient id="${id}" x1="0" y1="0" x2="0" y2="1"><stop offset="0" stop-color="${a}"/><stop offset="1" stop-color="${b}"/></linearGradient></defs>`;
const grad = (a, b) => lg('b', a, b) + bg('url(#b)');
const txt = (x, y, size, fill, s, extra = '') => `<text x="${x}" y="${y}" font-size="${size}" fill="${fill}" text-anchor="middle" font-family="Open Sans,sans-serif" font-weight="700" ${extra}>${s}</text>`;
const petals = ['#f59a1b', '#e8d420', '#8cc63f', '#4fb6a8', '#5a9be8', '#8a6fd0', '#c75fa8', '#f0473e'].map((c, i) => `<ellipse cx="25" cy="14" rx="6.500" ry="10" fill="${c}" fill-opacity=".85" transform="rotate(${i * 45} 25 25)"/>`).join('');
const DOCK = [
  [1, 'Finder', lg('b', '#1ec8fd', '#1d6ff0') + bg('#e6ebf2') + `<path fill="url(#b)" d="M11 0h17q-6 14-7 29h8q0 12 2 21H11Q0 50 0 39V11Q0 0 11 0z"/><path d="M13 14v5M37 14v5M11 33q14 12 28 0" fill="none" stroke="#12304f" stroke-width="2.400" stroke-linecap="round"/>`],
  [1, 'Outlook', bg('#fff') + `<path fill="#1490df" d="M14 9h27v32H14z"/><path fill="#28a8ea" d="M28 9h13v10H28z"/><path fill="#0f5eae" d="M14 26l13 7 14-8v16H14z"/><path fill="#35b8f1" d="M41 25v14L27 33z"/><rect x="4" y="15" width="19" height="19" rx="2" fill="#0f6cbd"/><ellipse cx="13.500" cy="24.500" rx="4" ry="5" fill="none" stroke="#fff" stroke-width="2.500"/>`],
  [1, 'Chrome', bg('#f1f1f1') + chrome(25, 25, 21)],
  [0, 'Messages', grad('#5ff574', '#12c32c') + `<path fill="#f2fff2" d="M25 11c11 0 18 6 18 14s-7 14-18 14c-2 0-4 0-6-1-2 2-5 3-8 3 2-2 3-4 2-6-4-2-6-6-6-10 0-8 7-14 18-14z"/>`],
  [1, 'WhatsApp', grad('#5ff574', '#12b82c') + `<path fill="none" stroke="#fff" stroke-width="3.500" d="M8 42l2.500-9A17.500 17.500 0 1 1 17 40z"/><path fill="#fff" d="M17 16q3-3 5 0l1 4q0 1-2 3 3 6 8 7l3-3 5 3q0 6-6 6Q18 34 16 21q0-3 1-5z"/>`],
  [0, 'Camera', grad('#0a68f0', '#053fa8') + `<rect x="16" y="6" width="18" height="37" rx="9" fill="#e8ecf2"/><rect x="17" y="7" width="16" height="17" rx="8" fill="#0b1f4a"/><circle cx="25" cy="14" r="4.500" fill="#1a4aa8"/><circle cx="25" cy="30" r="1" fill="#889"/>`],
  [0, 'Fusion', bg('#fff') + `<path fill="#8a3f05" d="M9 11h36v34H9z"/><path fill="#ff7300" d="M6 6h35v27H6z"/><path fill="#6b2f05" d="M13 33h31v12H13z"/>` + txt(26, 29, 26, '#fff', 'F') + txt(28, 43, 10, '#fff', 'FUS')],
  [0, 'Pill', bg('#fff') + `<g transform="rotate(22 25 25)"><rect x="14" y="5" width="21" height="40" rx="10.500" fill="#3c3c3c"/><path fill="#f26a22" d="M14 24l21 0v11a10.500 10.500 0 0 1-21 0z"/></g><path stroke="#fff" stroke-width="2" d="M14 33L38 14"/>`],
  [1, 'Illustrator', bg('#330000') + txt(25, 34, 27, '#ff9a00', 'Ai')],
  [0, 'Photoshop', bg('#001e36') + txt(25, 34, 27, '#31a8ff', 'Ps')],
  [1, 'Activity Monitor', bg('#b9c9cc') + `<rect x="2" y="2" width="46" height="46" rx="9" fill="#050808"/><path d="M5 16h40M5 27h40M5 37h40M16 5v40M26 5v40M36 5v40" stroke="#1b3f3a"/><path fill="none" stroke="#7fd8b4" stroke-width="1.400" d="M5 27h7l2-18 3 28 3-10h6l3 4 4-6 4 2h8"/>`],
  [0, 'Maps', `<clipPath id="c"><rect width="50" height="50" rx="11"/></clipPath><g clip-path="url(#c)"><path fill="#5fd06a" d="M0 0h50v50H0z"/><path fill="#f2f2f2" d="M10 0h18v50H10z"/><path fill="#1a7df0" d="M14 0h10v30H14z"/><path fill="#f7c53b" d="M50 40v10H30l6-8z"/><path stroke="#f2f2f2" stroke-width="6" d="M24 22l26 22"/><path fill="#e88ac0" d="M0 24q12 8 12 26H0z"/><circle cx="44" cy="6" r="11" fill="none" stroke="#d8e8e0" stroke-width="4"/></g><circle cx="20" cy="33" r="12" fill="#1a83f5" stroke="#fff" stroke-width="2.500"/><path fill="#fff" d="M20 24l6 16-6-4-6 4z"/>`],
  [0, 'Discord', grad('#6a78f5', '#5560e8') + `<path fill="#fff" d="M14 14q5-3 8-3l1 2h4l1-2q3 0 8 3 7 11 6 22-4 4-9 4l-2-4H19l-2 4q-5 0-9-4-1-11 6-22z"/><circle cx="19" cy="27" r="3.500" fill="#5865f2"/><circle cx="31" cy="27" r="3.500" fill="#5865f2"/>`],
  [0, 'Loxone', grad('#69e04e', '#58b048') + txt(25, 30, 11, '#fff', 'LOXONE', 'style="font-weight:600"')],
  [0, 'Photos', bg('#fff') + petals],
  [1, 'Spotify', `<circle cx="25" cy="25" r="25" fill="#1ed760"/><g fill="none" stroke="#121212" stroke-linecap="round"><path stroke-width="5" d="M9 17q17-5 33 4"/><path stroke-width="4" d="M11 26q15-4 27 3"/><path stroke-width="3.500" d="M12 34q13-3 23 3"/></g>`],
  [0, 'Cross', `<rect x="-4" y="-4" width="58" height="58" fill="#031633"/><circle cx="25" cy="25" r="22" fill="none" stroke="#fff" stroke-width="4.500"/><circle cx="25" cy="25" r="15.500" fill="#fff"/><path fill="#031633" d="M8 17q9 1 13 8-4 7-13 8zM42 17q-9 1-13 8 4 7 13 8z"/><path fill="none" stroke="#031633" stroke-width="2" d="M19 14q6 6 12 0M19 36q6-6 12 0"/>`],
  [1, 'Calendar', bg('#f7f7f5') + `<path fill="#f0524b" d="M0 16v-5Q0 0 11 0h28q11 0 11 11v5z"/>` + txt(25, 12, 11, '#fff', 'NOV', 'style="font-weight:600"') + txt(25, 43, 29, '#333', '4', 'style="font-weight:300"')],
  [0, 'Settings', grad('#d8dfe3', '#84888c') + `<circle cx="25" cy="25" r="21" fill="#3a3d40"/><circle cx="25" cy="25" r="18" fill="none" stroke="#b4b8bb" stroke-width="4" stroke-dasharray="2 1.500"/><circle cx="25" cy="25" r="12.500" fill="none" stroke="#a4a8aa" stroke-width="3.500"/><path stroke="#a4a8aa" stroke-width="3" d="M25 25h14M25 25l-8-12M25 25l-8 12"/>`],
  [1, 'App Store', grad('#1fb8fb', '#1c6cf2') + `<g stroke="#fff" stroke-width="4" stroke-linecap="round"><path d="M27 11L13 37M22 11l15 27M9 32h20M35 32h6"/></g>`],
  [0, 'L', `<circle cx="25" cy="25" r="27" fill="#2f5d9c"/><circle cx="25" cy="25" r="22" fill="#2a6fc2"/><circle cx="25" cy="25" r="27" fill="none" stroke="#8fb0dc" stroke-width="1.500"/><path fill="none" stroke="#fff" stroke-width="5" stroke-linecap="round" stroke-linejoin="round" d="M4 20q18 4 32-6 4-7-4-8-6 0-8 9l-5 20q-3 8-9 7-4-3 1-6 10-2 19 4 8 4 18-2"/>`],
  [0, 'Launchpad', bg('#b9bbbd') + [['#39d353', '#f0b400', '#f07a1a'], ['#f03a3a', '#8d9296', '#f03a5a'], ['#8a4ae0', '#2f7af0', '#23c49a']].map((r, y) => r.map((c, x) => `<rect x="${8 + x * 12}" y="${8 + y * 12}" width="9.500" height="9.500" rx="2" fill="${c}"/>`).join('')).join('')],
  [1, 'Editor', bg('#f4f8ee') + `<rect x="3" y="3" width="44" height="44" rx="8" fill="#7cbf22"/><path fill="none" stroke="#b7e36a" stroke-width="1.500" d="M3 16q10-4 12 4t12 2M20 3q-2 12 8 16M3 34q14-4 18 12M47 30q-12-2-14 8"/><path fill="#e8e8ea" stroke="#777" stroke-width=".8" d="M43-4l4 2-3 12-20 44-4 2v-6z"/>`],
  [1, 'Acrobat', bg('#b30b00') + `<path fill="none" stroke="#fff" stroke-width="2.600" stroke-linejoin="round" d="M24 12q4 0 2 8-3 10-9 17-4 4-6 1 0-5 12-8 8-2 14 0 5 3 1 5-6 1-12-9-5-9-2-14z"/>`],
  [0, 'Calculator', bg('#d2d2d0') + `<rect x="12" y="6" width="26" height="38" rx="5" fill="#2c2d2f"/><rect x="15" y="9" width="20" height="9" rx="1.500" fill="#55585c"/>` + [0, 1, 2].map(y => [0, 1, 2].map(x => `<circle cx="${18 + x * 7}" cy="${24 + y * 7}" r="2.500" fill="${x == 2 ? '#ff9a0a' : '#d6d6d6'}"/>`).join('')).join('')],
  [0, 'Remote', bg('#fff') + `<path fill="#0a58b0" d="M36 23h8v18H14v-4h22z"/><path fill="#0f6fd0" d="M6 11h34v27H6z"/><path fill="#fff" d="M10 15h26v19H10z"/>`],
  [0, 'Swallow', grad('#1156e6', '#0a3cc0') + `<path fill="#0a32a0" d="M10 22q8-8 18 0l-4 14q-10-2-14-14z"/><path fill="#dfe9ff" d="M20 31l6-5 1-6 3 3 6-5-1 8-5 6-8 1z"/>`],
  [0, 'Parallels', bg('#f6f6f6') + `<path fill="#d8102e" d="M30 0h5v50h-5zM40 0q10 1 10 11v28q0 10-10 11z"/><circle cx="6" cy="7" r="2.500" fill="#222"/><rect x="8" y="13" width="36" height="24" rx="2" fill="#2f86e0"/><path fill="#5db4f5" d="M8 13h20v14H8z"/><path fill="#eaf6ff" d="M18 22h8v9h-8zM24 18h8v8h-8z"/><path fill="#4a5560" d="M4 36h44l-4 3H8z"/>`],
  [0, 'iPhone', bg('#b3b5b6') + `<rect x="15" y="4" width="20" height="42" rx="4" fill="#161616"/><rect x="17" y="6" width="16" height="38" rx="3" fill="#f3a08a"/><path fill="#1c5f72" d="M33 18v23q0 3-3 3H20q-3 0-3-6z"/><rect x="22" y="6" width="6" height="2.500" rx="1" fill="#161616"/>`],
  [1, 'Preview', bg('#f2f2f2') + `<rect x="3" y="3" width="44" height="44" rx="8" fill="#8fb8ee"/><path fill="#3a5a9a" d="M3 29h44v10q0 8-8 8H11q-8 0-8-8z"/><path fill="#e6eef8" d="M3 38q8-6 14 0t12 0v9H11q-8 0-8-8z"/><path fill="#d9dde2" stroke="#888" d="M28 34h16l4 16q-12 5-24 0z"/><rect x="26" y="24" width="20" height="11" rx="4" fill="#151515"/>`],
  [1, 'Terminal', bg('#b7bdc0') + `<rect x="2" y="2" width="46" height="46" rx="9" fill="#0c0c0c"/><rect x="5" y="5" width="40" height="40" rx="6" fill="#262626"/><path fill="none" stroke="#fff" stroke-width="2" d="M9 9l5 4-5 4M17 19h7"/>`],
  [1, 'FileZilla', `<path fill="#bf0000" stroke="#bf0000" stroke-width="3" stroke-dasharray="3 2" d="M-4-4h58v58H-4z"/>` + txt(18, 41, 42, '#fff', 'F', 'font-style="italic"') + txt(35, 48, 40, '#fff', 'z', 'font-style="italic"')],
  [1, 'Excel', bg('#fff') + `<path fill="#21a366" d="M14 9h27v32H14z"/><path fill="#33c481" d="M28 9h13v10H28z"/><path fill="#185c37" d="M14 30h27v11H14z"/><rect x="4" y="15" width="19" height="19" rx="2" fill="#107c41"/>` + txt(13.5, 30, 14, '#fff', 'X')],
  [1, 'Numbers', grad('#55f05a', '#10c420') + `<path stroke="#fff" stroke-width="5.500" stroke-linecap="round" d="M12 35v4M20.500 26v13M29 10v29M37.500 19v20"/>`],
  'sep',
  [0, 'CSV', `<path fill="#e4e4e4" d="M2-4h24l8 8v18H2z"/><path fill="#f5f5f5" d="M5 0h28l12 20v33H5z"/><path fill="#c6c6c6" d="M30-4l15 24H34z"/>` + txt(25, 48, 8, '#777', 'CSV', 'style="font-weight:400"')],
  [0, 'Trash', `<path fill="#d0d0d0" d="M8 6l5-8 6 3 5-5 6 5 8-4 4 9z"/><path fill="#c27a4a" d="M14 1l6 2-2 4zM28 0l5 3-3 4z"/>` + lg('b', '#a6aaad', '#53575a') + `<path fill="url(#b)" fill-opacity=".92" d="M6 5h38l-5 45q-14 5-28 0z"/><ellipse cx="25" cy="6" rx="19" ry="3.500" fill="none" stroke="#c8cacc"/>`],
];
element('dock-tile', `<style>:host{display:block;position:relative;width:50px;height:50px}svg{display:block;overflow:visible;width:50px;height:50px}
i{position:absolute;left:22px;top:57px;width:7px;height:7px;border-radius:50%;background:#9c9c9c}</style><div id="d"></div>`, (host, root) => {
  const [on, name, body] = DOCK[host.getAttribute('index')];
  root.getElementById('d').innerHTML = `<svg viewBox="0 0 50 50" role="img" aria-label="${name}">${body}</svg>${on ? '<i></i>' : ''}`;
});
element('desk-dock', `<style>:host{display:flex;gap:14px;box-sizing:border-box;height:79px;padding:11px 12px 0 10px;border:2px solid #444;border-radius:24px;background:#212121}
.sep{width:2px;height:56px;background:#555;margin:-1px 6px 0 4px}</style>`, (host, root) => {
  root.innerHTML += DOCK.map((d, i) => d === 'sep' ? '<div class="sep"></div>' : `<dock-tile index="${i}"></dock-tile>`).join('');
});

/* ---------- annotations ---------- */
element('note-label', `<style>:host{display:block;background:#fff0f3;color:#fa3541;border-radius:6px;padding:0 11px;font:700 45px/57px Inter,sans-serif;white-space:nowrap;box-shadow:0 1px 4px rgba(0,0,0,.4)}
:host([large]){padding:14px 28px;line-height:56px;border-radius:9px}</style><slot></slot>`);
element('note-frame', `<style>:host{display:block;box-sizing:border-box;border:11px solid #fa3541;border-radius:4px}</style>`);
element('note-arrows', `<style>:host{display:block}svg{display:block;width:100%;height:100%}</style><svg fill="none" stroke="#fa3541" stroke-width="10" stroke-linecap="round" stroke-linejoin="round" aria-hidden="true">
<path d="M679 434L587 614M579 588L587 614L608 602"/>
<path d="M2596 490L2270 599M2286 578L2270 599L2292 609"/>
<path d="M3540 331L3796 410M3780 389L3796 410L3771 419"/></svg>`);
</script>
</body>
</html>
